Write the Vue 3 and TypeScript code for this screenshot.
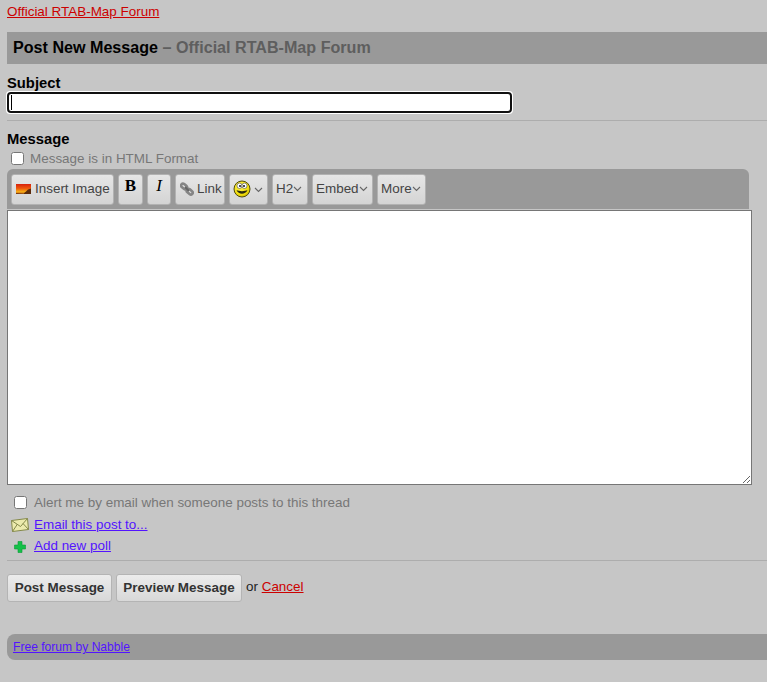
<script setup lang="ts">
import { onMounted, ref } from 'vue'
const subject = ref<HTMLInputElement | null>(null)
onMounted(() => subject.value?.focus())
</script>

<template>
  <div class="page">
    <div class="crumb"><a href="#" class="red">Official RTAB-Map Forum</a></div>
    <h1 class="title">Post New Message <span class="sub">– Official RTAB-Map Forum</span></h1>
    <label class="label subject-label">Subject</label>
    <div class="subject-wrap">
      <input ref="subject" class="subject" type="text" />
      <span class="caret"></span>
    </div>
    <hr class="rule first" />
    <label class="label message-label">Message</label>
    <label class="check html-check"><input type="checkbox" /><span>Message is in HTML Format</span></label>
    <div class="toolbar">
      <button class="tool insert">
        <svg width="15" height="10" viewBox="0 0 15 10">
          <defs>
            <linearGradient id="sun" x1="0" y1="0" x2="0" y2="1">
              <stop offset="0" stop-color="#d8200c" />
              <stop offset="0.45" stop-color="#ee5a0c" />
              <stop offset="0.75" stop-color="#f4a814" />
              <stop offset="1" stop-color="#c8701a" />
            </linearGradient>
          </defs>
          <rect width="15" height="10" fill="url(#sun)" />
          <path d="M7 10L10 7.500L12 5.500L15 4.500V10Z" fill="#5a2a0c" />
          <path d="M0 10V9L7 9.400V10Z" fill="#7a3a10" />
        </svg>
        <span>Insert Image</span>
      </button>
      <button class="tool serif bold">B</button>
      <button class="tool serif italic">I</button>
      <button class="tool link">
        <svg width="14" height="14" viewBox="0 0 14 14">
          <g fill="none" stroke="#858585" stroke-width="2.600">
            <rect x="1" y="2.400" width="6.600" height="3.800" rx="1.900" transform="rotate(40 4 4)" />
            <rect x="6.400" y="7.800" width="6.600" height="3.800" rx="1.900" transform="rotate(40 9.700 9.700)" />
          </g>
          <path d="M5 5L9 9" stroke="#666" stroke-width="1.800" />
        </svg>
        <span>Link</span>
      </button>
      <button class="tool smile">
        <svg width="18" height="18" viewBox="0 0 18 18">
          <defs>
            <radialGradient id="face" cx="0.4" cy="0.35" r="0.75">
              <stop offset="0" stop-color="#fff45a" />
              <stop offset="0.7" stop-color="#f0dc08" />
              <stop offset="1" stop-color="#b8a408" />
            </radialGradient>
          </defs>
          <circle cx="9" cy="9" r="8" fill="url(#face)" stroke="#4e4a10" stroke-width="1" />
          <ellipse cx="6.500" cy="5.800" rx="2.500" ry="2.700" fill="#fff" stroke="#444" stroke-width="0.600" />
          <ellipse cx="11.500" cy="5.800" rx="2.500" ry="2.700" fill="#fff" stroke="#444" stroke-width="0.600" />
          <circle cx="7" cy="6" r="1" fill="#111" />
          <circle cx="11" cy="6" r="1" fill="#111" />
          <path d="M3.500 10C5.500 15 12.500 15 14.500 10C12 11.500 6 11.500 3.500 10Z" fill="#2a2a10" />
        </svg>
        <svg class="chev smile-chev" width="9" height="6" viewBox="0 0 9 6"><path d="M1 1L4.500 4.500L8 1" fill="none" stroke="#666" stroke-width="1.100" /></svg>
      </button>
      <button class="tool menu h2">H2<svg class="chev" width="9" height="6" viewBox="0 0 9 6"><path d="M1 1L4.500 4.500L8 1" fill="none" stroke="#666" stroke-width="1.100" /></svg></button>
      <button class="tool menu embed">Embed<svg class="chev" width="9" height="6" viewBox="0 0 9 6"><path d="M1 1L4.500 4.500L8 1" fill="none" stroke="#666" stroke-width="1.100" /></svg></button>
      <button class="tool menu more">More<svg class="chev" width="9" height="6" viewBox="0 0 9 6"><path d="M1 1L4.500 4.500L8 1" fill="none" stroke="#666" stroke-width="1.100" /></svg></button>
    </div>
    <textarea class="body-text"></textarea>
    <label class="check alert-check"><input type="checkbox" /><span>Alert me by email when someone posts to this thread</span></label>
    <div class="action email">
      <svg class="action-icon" width="18" height="14" viewBox="0 0 18 14">
        <path d="M0.500 2.500L16.500 0.500L17.500 11.500L1.500 13.500Z" fill="#ecebae" stroke="#84894a" />
        <path d="M0.500 2.500L9.500 8.500L16.500 0.500M1.500 13.500L6.500 6M17.500 11.500L12 5.500" fill="none" stroke="#84894a" />
      </svg>
      <a href="#" class="blue">Email this post to...</a>
    </div>
    <div class="action poll">
      <span class="icon-slot">
        <svg width="12" height="12" viewBox="0 0 12 12">
          <path d="M4 0.500H8V4H11.500V8H8V11.500H4V8H0.500V4H4Z" fill="#14c048" stroke="#0c9a38" stroke-width="0.600" />
        </svg>
      </span>
      <a href="#" class="blue">Add new poll</a>
    </div>
    <hr class="rule second" />
    <div class="actions">
      <button class="big">Post Message</button>
      <button class="big">Preview Message</button>
      <span class="or">or <a href="#" class="red">Cancel</a></span>
    </div>
    <div class="footer"><a href="#" class="blue">Free forum by Nabble</a></div>
  </div>
</template>

<style>
html, body { margin: 0; background: #c6c6c6; overflow: hidden; }
</style>

<style scoped>
.page {
  box-sizing: border-box;
  width: 767px;
  height: 682px;
  padding: 4px 0 0 7px;
  overflow: hidden;
  font-family: "Liberation Sans", Arial, sans-serif;
  font-size: 13.44px;
  color: #222;
}
.red { color: #c00; }
.blue { color: #5314ff; }
.crumb { height: 16px; line-height: 16px; }
.title {
  box-sizing: border-box;
  margin: 12px 0 0;
  height: 32px;
  line-height: 31px;
  padding-left: 6px;
  background: #999;
  color: #000;
  font-size: 16.13px;
  font-weight: bold;
}
.sub { color: #5e5e5e; }
.label { display: block; font-weight: bold; font-size: 14.78px; color: #000; line-height: 17px; }
.subject-label { margin-top: 11px; }
.subject-wrap { position: relative; width: 505px; height: 21px; }
.subject {
  display: block;
  box-sizing: border-box;
  width: 505px;
  height: 21px;
  margin: 0;
  padding: 1px 2px;
  border: 2px solid #767676;
  background: #fff;
  caret-color: transparent;
}
.caret {
  position: absolute;
  left: 4px;
  top: 3px;
  width: 1px;
  height: 15px;
  background: #000;
}
.rule { margin: 0; border: 0; height: 1px; background: #adadad; }
.rule.first { margin-top: 7px; }
.message-label { margin-top: 10px; }
.check { display: flex; align-items: center; color: #777; }
.check input { width: 13px; height: 13px; margin: 0; }
.html-check { margin: 2px 0 0 4px; height: 16px; }
.html-check span { margin-left: 6px; }
.toolbar {
  box-sizing: border-box;
  display: flex;
  gap: 4px;
  width: 742px;
  height: 40px;
  margin-top: 3px;
  padding: 5px 4px 0;
  background: #999;
  border-radius: 6px 6px 0 0;
}
.tool {
  box-sizing: border-box;
  display: flex;
  align-items: center;
  height: 31px;
  padding: 0 0 2px 4px;
  border: 1px solid #b2b2b2;
  border-radius: 3px;
  background: linear-gradient(#e6e6e6, #d4d4d4);
  font: 13.44px "Liberation Sans", Arial, sans-serif;
  color: #444;
  white-space: nowrap;
}
.insert { width: 103px; gap: 4px; }
.serif { justify-content: center; align-items: flex-start; padding: 1px 0 0; font-family: "Liberation Serif", "Times New Roman", serif; font-size: 17px; color: #000; }
.bold { width: 25px; font-weight: bold; }
.italic { width: 24px; font-style: italic; }
.link { width: 50px; gap: 3px; }
.smile { width: 39px; gap: 3px; padding: 0 0 1px 3px; }
.h2 { width: 36px; padding-left: 3px; }
.embed { width: 61px; padding-left: 3px; }
.more { width: 49px; padding-left: 3px; }
.chev { flex: none; margin-top: 1px; }
.body-text {
  display: block;
  box-sizing: border-box;
  width: 745px;
  height: 275px;
  margin: 1px 0 0;
  padding: 2px;
  background: #fff;
  border: 1px solid #767676;
  border-radius: 0;
  outline: 0;
}
.alert-check { margin: 9px 0 0 7px; height: 16px; }
.alert-check span { margin-left: 7px; }
.action { display: flex; align-items: center; height: 16px; }
.email { margin-top: 6px; margin-left: 4px; }
.email .action-icon { margin: 2px 5px 0 0; }
.poll { margin-top: 5px; margin-left: 7px; }
.icon-slot { display: flex; width: 20px; padding-top: 3px; }
.rule.second { margin-top: 7px; }
.actions { display: flex; align-items: flex-start; gap: 4px; margin-top: 13px; }
.big {
  box-sizing: border-box;
  height: 28px;
  padding: 0 0 2px;
  border: 1px solid #b4b4b4;
  border-radius: 3px;
  background: linear-gradient(#ececec, #d8d8d8);
  font: bold 13.44px "Liberation Sans", Arial, sans-serif;
  color: #333;
  width: 105px;
}
.big + .big { width: 126px; }
.or { margin-top: 5px; }
.footer {
  box-sizing: border-box;
  height: 26px;
  margin-top: 32px;
  padding-left: 6px;
  line-height: 26px;
  background: #999;
  border-radius: 8px 0 0 8px;
  font-size: 12.1px;
}
</style>
